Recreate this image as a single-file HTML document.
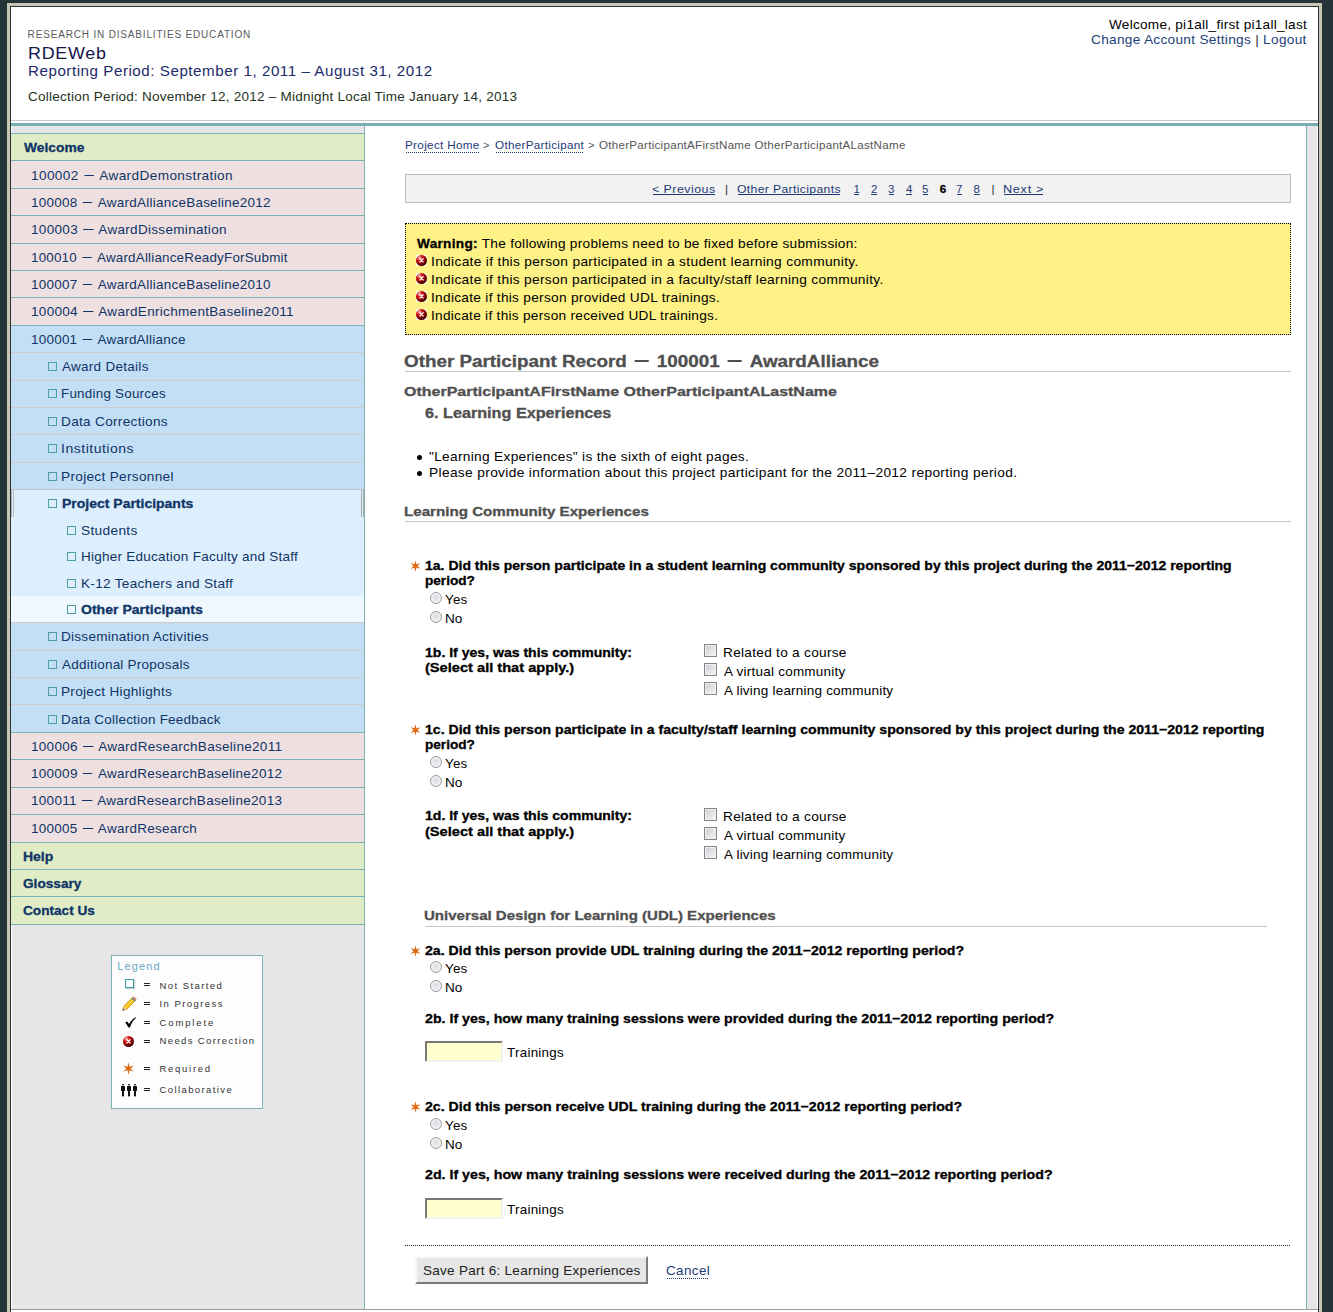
<!DOCTYPE html>
<html><head><meta charset="utf-8"><title>RDEWeb</title>
<style>
html,body{margin:0;padding:0;}
body{width:1333px;height:1312px;overflow:hidden;position:relative;background:#243438;font-family:'Liberation Sans', sans-serif;}
b{font-weight:bold;-webkit-text-stroke:0.3px currentColor;}
svg{display:block;}
.md{display:inline-block;width:9.5px;height:1px;background:currentColor;vertical-align:4px;margin:0 5px}.mdt{display:inline-block;width:12.5px;height:2px;background:currentColor;vertical-align:5px;margin:0 6.5px}
</style></head><body>
<div style="position:absolute;left:7px;top:3px;width:1315px;height:1400px;background:#c8c6b2"></div>
<div style="position:absolute;left:10px;top:6px;width:1309px;height:1400px;background:#243438"></div>
<div style="position:absolute;left:11px;top:7px;width:1307px;height:1400px;background:#fff"></div>
<div style="position:absolute;left:11px;top:120px;width:1307px;height:1px;background:#c9c9c9"></div>
<div style="position:absolute;left:11px;top:123px;width:1307px;height:3px;background:#76b0b2"></div>
<div style="position:absolute;left:12px;top:126px;width:352px;height:1183px;background:#e6e6e6"></div>
<div style="position:absolute;left:364px;top:126px;width:1px;height:1183px;background:#79b3b6"></div>
<div style="position:absolute;left:1307px;top:126px;width:10px;height:1183px;background:#e6e6e6"></div>
<div style="position:absolute;left:1306px;top:126px;width:1px;height:1183px;background:#79b3b6"></div>
<div style="position:absolute;left:11px;top:1309px;width:1307px;height:1px;background:#9a9a9a"></div>
<div style="position:absolute;left:11px;top:134px;width:353px;height:26px;background:#dfecc6"></div>
<div style="position:absolute;left:11px;top:161px;width:353px;height:27px;background:#eee0e1"></div>
<div style="position:absolute;left:11px;top:189px;width:353px;height:26px;background:#eee0e1"></div>
<div style="position:absolute;left:11px;top:216px;width:353px;height:27px;background:#eee0e1"></div>
<div style="position:absolute;left:11px;top:244px;width:353px;height:26px;background:#eee0e1"></div>
<div style="position:absolute;left:11px;top:271px;width:353px;height:26px;background:#eee0e1"></div>
<div style="position:absolute;left:11px;top:298px;width:353px;height:27px;background:#eee0e1"></div>
<div style="position:absolute;left:11px;top:326px;width:353px;height:26px;background:#c3dff5"></div>
<div style="position:absolute;left:11px;top:353px;width:353px;height:27px;background:#c3dff5"></div>
<div style="position:absolute;left:11px;top:381px;width:353px;height:26px;background:#c3dff5"></div>
<div style="position:absolute;left:11px;top:408px;width:353px;height:26px;background:#c3dff5"></div>
<div style="position:absolute;left:11px;top:435px;width:353px;height:27px;background:#c3dff5"></div>
<div style="position:absolute;left:11px;top:463px;width:353px;height:26px;background:#c3dff5"></div>
<div style="position:absolute;left:11px;top:133px;width:353px;height:1px;background:#79b3b6"></div>
<div style="position:absolute;left:11px;top:160px;width:353px;height:1px;background:#79b3b6"></div>
<div style="position:absolute;left:11px;top:188px;width:353px;height:1px;background:#79b3b6"></div>
<div style="position:absolute;left:11px;top:215px;width:353px;height:1px;background:#79b3b6"></div>
<div style="position:absolute;left:11px;top:243px;width:353px;height:1px;background:#79b3b6"></div>
<div style="position:absolute;left:11px;top:270px;width:353px;height:1px;background:#79b3b6"></div>
<div style="position:absolute;left:11px;top:297px;width:353px;height:1px;background:#79b3b6"></div>
<div style="position:absolute;left:11px;top:325px;width:353px;height:1px;background:#79b3b6"></div>
<div style="position:absolute;left:11px;top:352px;width:353px;height:1px;background:#cfcccb"></div>
<div style="position:absolute;left:11px;top:380px;width:353px;height:1px;background:#cfcccb"></div>
<div style="position:absolute;left:11px;top:407px;width:353px;height:1px;background:#cfcccb"></div>
<div style="position:absolute;left:11px;top:434px;width:353px;height:1px;background:#cfcccb"></div>
<div style="position:absolute;left:11px;top:462px;width:353px;height:1px;background:#cfcccb"></div>
<div style="position:absolute;left:11px;top:489px;width:353px;height:1px;background:#cfcccb"></div>
<div style="position:absolute;left:11px;top:490px;width:353px;height:106px;background:#ddeefd"></div>
<div style="position:absolute;left:11px;top:596px;width:353px;height:26px;background:#eff8fe"></div>
<div style="position:absolute;left:11px;top:489px;width:351px;height:1px;background:#c6c4c4"></div>
<div style="position:absolute;left:11px;top:490px;width:1px;height:27px;background:#b0b0b0"></div>
<div style="position:absolute;left:13px;top:490px;width:1px;height:27px;background:#b8b8b8"></div>
<div style="position:absolute;left:361px;top:490px;width:1px;height:27px;background:#a8a8a8"></div>
<div style="position:absolute;left:363px;top:489px;width:1px;height:28px;background:#a8a8a8"></div>
<div style="position:absolute;left:11px;top:623px;width:353px;height:27px;background:#c3dff5"></div>
<div style="position:absolute;left:11px;top:651px;width:353px;height:26px;background:#c3dff5"></div>
<div style="position:absolute;left:11px;top:678px;width:353px;height:26px;background:#c3dff5"></div>
<div style="position:absolute;left:11px;top:705px;width:353px;height:27px;background:#c3dff5"></div>
<div style="position:absolute;left:11px;top:733px;width:353px;height:26px;background:#eee0e1"></div>
<div style="position:absolute;left:11px;top:760px;width:353px;height:27px;background:#eee0e1"></div>
<div style="position:absolute;left:11px;top:788px;width:353px;height:26px;background:#eee0e1"></div>
<div style="position:absolute;left:11px;top:815px;width:353px;height:27px;background:#eee0e1"></div>
<div style="position:absolute;left:11px;top:843px;width:353px;height:26px;background:#dfecc6"></div>
<div style="position:absolute;left:11px;top:870px;width:353px;height:26px;background:#dfecc6"></div>
<div style="position:absolute;left:11px;top:897px;width:353px;height:27px;background:#dfecc6"></div>
<div style="position:absolute;left:11px;top:622px;width:353px;height:1px;background:#cfcccb"></div>
<div style="position:absolute;left:11px;top:650px;width:353px;height:1px;background:#cfcccb"></div>
<div style="position:absolute;left:11px;top:677px;width:353px;height:1px;background:#cfcccb"></div>
<div style="position:absolute;left:11px;top:704px;width:353px;height:1px;background:#cfcccb"></div>
<div style="position:absolute;left:11px;top:732px;width:353px;height:1px;background:#79b3b6"></div>
<div style="position:absolute;left:11px;top:759px;width:353px;height:1px;background:#79b3b6"></div>
<div style="position:absolute;left:11px;top:787px;width:353px;height:1px;background:#79b3b6"></div>
<div style="position:absolute;left:11px;top:814px;width:353px;height:1px;background:#79b3b6"></div>
<div style="position:absolute;left:11px;top:842px;width:353px;height:1px;background:#79b3b6"></div>
<div style="position:absolute;left:11px;top:869px;width:353px;height:1px;background:#79b3b6"></div>
<div style="position:absolute;left:11px;top:896px;width:353px;height:1px;background:#79b3b6"></div>
<div style="position:absolute;left:11px;top:924px;width:353px;height:1px;background:#79b3b6"></div>
<div style="position:absolute;left:48px;top:362px;width:7px;height:7px;border:1px solid #4f9ea6;background:transparent"></div>
<div style="position:absolute;left:48px;top:389px;width:7px;height:7px;border:1px solid #4f9ea6;background:transparent"></div>
<div style="position:absolute;left:48px;top:417px;width:7px;height:7px;border:1px solid #4f9ea6;background:transparent"></div>
<div style="position:absolute;left:48px;top:444px;width:7px;height:7px;border:1px solid #4f9ea6;background:transparent"></div>
<div style="position:absolute;left:48px;top:472px;width:7px;height:7px;border:1px solid #4f9ea6;background:transparent"></div>
<div style="position:absolute;left:48px;top:499px;width:7px;height:7px;border:1px solid #4f9ea6;background:transparent"></div>
<div style="position:absolute;left:67px;top:526px;width:7px;height:7px;border:1px solid #4f9ea6;background:transparent"></div>
<div style="position:absolute;left:67px;top:552px;width:7px;height:7px;border:1px solid #4f9ea6;background:transparent"></div>
<div style="position:absolute;left:67px;top:579px;width:7px;height:7px;border:1px solid #4f9ea6;background:transparent"></div>
<div style="position:absolute;left:67px;top:605px;width:7px;height:7px;border:1px solid #4f9ea6;background:transparent"></div>
<div style="position:absolute;left:48px;top:632px;width:7px;height:7px;border:1px solid #4f9ea6;background:transparent"></div>
<div style="position:absolute;left:48px;top:660px;width:7px;height:7px;border:1px solid #4f9ea6;background:transparent"></div>
<div style="position:absolute;left:48px;top:687px;width:7px;height:7px;border:1px solid #4f9ea6;background:transparent"></div>
<div style="position:absolute;left:48px;top:715px;width:7px;height:7px;border:1px solid #4f9ea6;background:transparent"></div>
<div style="position:absolute;left:406px;top:152px;width:73px;height:1px;background:repeating-linear-gradient(90deg,#1e3a78 0 1px,transparent 1px 2px)"></div>
<div style="position:absolute;left:496px;top:152px;width:88px;height:1px;background:repeating-linear-gradient(90deg,#1e3a78 0 1px,transparent 1px 2px)"></div>
<div style="position:absolute;left:405px;top:174px;width:884px;height:27px;border:1px solid #b9b9b9;background:#f2f2f2"></div>
<div style="position:absolute;left:653px;top:194px;width:62px;height:1px;background:#1e3a78"></div>
<div style="position:absolute;left:738px;top:194px;width:102px;height:1px;background:#1e3a78"></div>
<div style="position:absolute;left:854px;top:194px;width:5px;height:1px;background:#1e3a78"></div>
<div style="position:absolute;left:871px;top:194px;width:6px;height:1px;background:#1e3a78"></div>
<div style="position:absolute;left:889px;top:194px;width:5px;height:1px;background:#1e3a78"></div>
<div style="position:absolute;left:906px;top:194px;width:6px;height:1px;background:#1e3a78"></div>
<div style="position:absolute;left:923px;top:194px;width:5px;height:1px;background:#1e3a78"></div>
<div style="position:absolute;left:957px;top:194px;width:5px;height:1px;background:#1e3a78"></div>
<div style="position:absolute;left:974px;top:194px;width:6px;height:1px;background:#1e3a78"></div>
<div style="position:absolute;left:1004px;top:194px;width:39px;height:1px;background:#1e3a78"></div>
<div style="position:absolute;left:405px;top:223px;width:884px;height:110px;border:1px dotted #000;background:#fef185"></div>
<div style="position:absolute;left:416px;top:255px;width:11px;height:11px"><svg width="11" height="11" viewBox="0 0 11 11"><defs><radialGradient id="rg0" cx="0.3" cy="0.25" r="0.8"><stop offset="0" stop-color="#f4b8b8"/><stop offset="0.35" stop-color="#d40c0c"/><stop offset="1" stop-color="#3a0000"/></radialGradient></defs><rect width="11" height="11" fill="#fff" opacity="0.9"/><circle cx="5.5" cy="5.5" r="5.5" fill="url(#rg0)"/><path d="M3.9 3.7L7.1 6.9M7.1 3.7L3.9 6.9" stroke="#fff" stroke-width="1.35" stroke-linecap="round"/></svg></div>
<div style="position:absolute;left:416px;top:273px;width:11px;height:11px"><svg width="11" height="11" viewBox="0 0 11 11"><defs><radialGradient id="rg1" cx="0.3" cy="0.25" r="0.8"><stop offset="0" stop-color="#f4b8b8"/><stop offset="0.35" stop-color="#d40c0c"/><stop offset="1" stop-color="#3a0000"/></radialGradient></defs><rect width="11" height="11" fill="#fff" opacity="0.9"/><circle cx="5.5" cy="5.5" r="5.5" fill="url(#rg1)"/><path d="M3.9 3.7L7.1 6.9M7.1 3.7L3.9 6.9" stroke="#fff" stroke-width="1.35" stroke-linecap="round"/></svg></div>
<div style="position:absolute;left:416px;top:291px;width:11px;height:11px"><svg width="11" height="11" viewBox="0 0 11 11"><defs><radialGradient id="rg2" cx="0.3" cy="0.25" r="0.8"><stop offset="0" stop-color="#f4b8b8"/><stop offset="0.35" stop-color="#d40c0c"/><stop offset="1" stop-color="#3a0000"/></radialGradient></defs><rect width="11" height="11" fill="#fff" opacity="0.9"/><circle cx="5.5" cy="5.5" r="5.5" fill="url(#rg2)"/><path d="M3.9 3.7L7.1 6.9M7.1 3.7L3.9 6.9" stroke="#fff" stroke-width="1.35" stroke-linecap="round"/></svg></div>
<div style="position:absolute;left:416px;top:309px;width:11px;height:11px"><svg width="11" height="11" viewBox="0 0 11 11"><defs><radialGradient id="rg3" cx="0.3" cy="0.25" r="0.8"><stop offset="0" stop-color="#f4b8b8"/><stop offset="0.35" stop-color="#d40c0c"/><stop offset="1" stop-color="#3a0000"/></radialGradient></defs><rect width="11" height="11" fill="#fff" opacity="0.9"/><circle cx="5.5" cy="5.5" r="5.5" fill="url(#rg3)"/><path d="M3.9 3.7L7.1 6.9M7.1 3.7L3.9 6.9" stroke="#fff" stroke-width="1.35" stroke-linecap="round"/></svg></div>
<div style="position:absolute;left:405px;top:371px;width:886px;height:1px;background:#c8c8c8"></div>
<div style="position:absolute;left:405px;top:521px;width:886px;height:1px;background:#c8c8c8"></div>
<div style="position:absolute;left:425px;top:926px;width:842px;height:1px;background:#c8c8c8"></div>
<div style="position:absolute;left:417px;top:455px;width:5px;height:5px;border-radius:50%;background:#000"></div>
<div style="position:absolute;left:417px;top:471px;width:5px;height:5px;border-radius:50%;background:#000"></div>
<div style="position:absolute;left:410px;top:560.3px;width:11px;height:12px"><svg width="11" height="12" viewBox="-5.5 -6 11 12"><path d="M0.00 -5.70 L0.95 -1.65 L4.94 -2.85 L1.90 -0.00 L4.94 2.85 L0.95 1.65 L0.00 5.70 L-0.95 1.65 L-4.94 2.85 L-1.90 0.00 L-4.94 -2.85 L-0.95 -1.65Z" fill="#e06a12"/></svg></div>
<div style="position:absolute;left:410px;top:723.5px;width:11px;height:12px"><svg width="11" height="12" viewBox="-5.5 -6 11 12"><path d="M0.00 -5.70 L0.95 -1.65 L4.94 -2.85 L1.90 -0.00 L4.94 2.85 L0.95 1.65 L0.00 5.70 L-0.95 1.65 L-4.94 2.85 L-1.90 0.00 L-4.94 -2.85 L-0.95 -1.65Z" fill="#e06a12"/></svg></div>
<div style="position:absolute;left:410px;top:944.5px;width:11px;height:12px"><svg width="11" height="12" viewBox="-5.5 -6 11 12"><path d="M0.00 -5.70 L0.95 -1.65 L4.94 -2.85 L1.90 -0.00 L4.94 2.85 L0.95 1.65 L0.00 5.70 L-0.95 1.65 L-4.94 2.85 L-1.90 0.00 L-4.94 -2.85 L-0.95 -1.65Z" fill="#e06a12"/></svg></div>
<div style="position:absolute;left:410px;top:1100.8px;width:11px;height:12px"><svg width="11" height="12" viewBox="-5.5 -6 11 12"><path d="M0.00 -5.70 L0.95 -1.65 L4.94 -2.85 L1.90 -0.00 L4.94 2.85 L0.95 1.65 L0.00 5.70 L-0.95 1.65 L-4.94 2.85 L-1.90 0.00 L-4.94 -2.85 L-0.95 -1.65Z" fill="#e06a12"/></svg></div>
<div style="position:absolute;left:430px;top:592px;width:10px;height:10px;border-radius:50%;border:1px solid #9a9a9a;box-shadow:inset 0 0 0 1px #f4f4f4;background:radial-gradient(circle at 50% 40%,#d7dbe0 0,#e9ebee 45%,#f7f7f7 100%)"></div>
<div style="position:absolute;left:430px;top:611px;width:10px;height:10px;border-radius:50%;border:1px solid #9a9a9a;box-shadow:inset 0 0 0 1px #f4f4f4;background:radial-gradient(circle at 50% 40%,#d7dbe0 0,#e9ebee 45%,#f7f7f7 100%)"></div>
<div style="position:absolute;left:430px;top:756px;width:10px;height:10px;border-radius:50%;border:1px solid #9a9a9a;box-shadow:inset 0 0 0 1px #f4f4f4;background:radial-gradient(circle at 50% 40%,#d7dbe0 0,#e9ebee 45%,#f7f7f7 100%)"></div>
<div style="position:absolute;left:430px;top:775px;width:10px;height:10px;border-radius:50%;border:1px solid #9a9a9a;box-shadow:inset 0 0 0 1px #f4f4f4;background:radial-gradient(circle at 50% 40%,#d7dbe0 0,#e9ebee 45%,#f7f7f7 100%)"></div>
<div style="position:absolute;left:430px;top:961px;width:10px;height:10px;border-radius:50%;border:1px solid #9a9a9a;box-shadow:inset 0 0 0 1px #f4f4f4;background:radial-gradient(circle at 50% 40%,#d7dbe0 0,#e9ebee 45%,#f7f7f7 100%)"></div>
<div style="position:absolute;left:430px;top:980px;width:10px;height:10px;border-radius:50%;border:1px solid #9a9a9a;box-shadow:inset 0 0 0 1px #f4f4f4;background:radial-gradient(circle at 50% 40%,#d7dbe0 0,#e9ebee 45%,#f7f7f7 100%)"></div>
<div style="position:absolute;left:430px;top:1118px;width:10px;height:10px;border-radius:50%;border:1px solid #9a9a9a;box-shadow:inset 0 0 0 1px #f4f4f4;background:radial-gradient(circle at 50% 40%,#d7dbe0 0,#e9ebee 45%,#f7f7f7 100%)"></div>
<div style="position:absolute;left:430px;top:1137px;width:10px;height:10px;border-radius:50%;border:1px solid #9a9a9a;box-shadow:inset 0 0 0 1px #f4f4f4;background:radial-gradient(circle at 50% 40%,#d7dbe0 0,#e9ebee 45%,#f7f7f7 100%)"></div>
<div style="position:absolute;left:704px;top:644px;width:11px;height:11px;border:1px solid #858585;box-shadow:inset 0 0 0 1px #f0f0f0;background:linear-gradient(135deg,#c9ccd0 0,#e2e4e7 55%,#f6f6f6 100%)"></div>
<div style="position:absolute;left:704px;top:663px;width:11px;height:11px;border:1px solid #858585;box-shadow:inset 0 0 0 1px #f0f0f0;background:linear-gradient(135deg,#c9ccd0 0,#e2e4e7 55%,#f6f6f6 100%)"></div>
<div style="position:absolute;left:704px;top:682px;width:11px;height:11px;border:1px solid #858585;box-shadow:inset 0 0 0 1px #f0f0f0;background:linear-gradient(135deg,#c9ccd0 0,#e2e4e7 55%,#f6f6f6 100%)"></div>
<div style="position:absolute;left:704px;top:808px;width:11px;height:11px;border:1px solid #858585;box-shadow:inset 0 0 0 1px #f0f0f0;background:linear-gradient(135deg,#c9ccd0 0,#e2e4e7 55%,#f6f6f6 100%)"></div>
<div style="position:absolute;left:704px;top:827px;width:11px;height:11px;border:1px solid #858585;box-shadow:inset 0 0 0 1px #f0f0f0;background:linear-gradient(135deg,#c9ccd0 0,#e2e4e7 55%,#f6f6f6 100%)"></div>
<div style="position:absolute;left:704px;top:846px;width:11px;height:11px;border:1px solid #858585;box-shadow:inset 0 0 0 1px #f0f0f0;background:linear-gradient(135deg,#c9ccd0 0,#e2e4e7 55%,#f6f6f6 100%)"></div>
<div style="position:absolute;left:425px;top:1041px;width:74px;height:17px;border-top:2px solid #777;border-left:2px solid #777;border-right:2px solid #f1f1f1;border-bottom:2px solid #f1f1f1;background:#ffffd0"></div>
<div style="position:absolute;left:425px;top:1198px;width:74px;height:17px;border-top:2px solid #777;border-left:2px solid #777;border-right:2px solid #f1f1f1;border-bottom:2px solid #f1f1f1;background:#ffffd0"></div>
<div style="position:absolute;left:405px;top:1245px;width:885px;height:1px;background:repeating-linear-gradient(90deg,#222 0 1px,transparent 1px 2px)"></div>
<div style="position:absolute;left:415px;top:1256px;width:229px;height:24px;border-top:2px solid #f8f8f8;border-left:2px solid #f8f8f8;border-right:2px solid #7a7a7a;border-bottom:2px solid #7a7a7a;background:#e6e6e6"></div>
<div style="position:absolute;left:667px;top:1278px;width:42px;height:1px;background:repeating-linear-gradient(90deg,#1e3a78 0 1px,transparent 1px 2px)"></div>
<div style="position:absolute;left:111px;top:955px;width:150px;height:152px;border:1px solid #79b3b6;background:#fdfdfd"></div>
<div style="position:absolute;left:144px;top:983px;width:6px;height:1px;background:#222"></div>
<div style="position:absolute;left:144px;top:985px;width:6px;height:1px;background:#222"></div>
<div style="position:absolute;left:144px;top:1002px;width:6px;height:1px;background:#222"></div>
<div style="position:absolute;left:144px;top:1004px;width:6px;height:1px;background:#222"></div>
<div style="position:absolute;left:144px;top:1021px;width:6px;height:1px;background:#222"></div>
<div style="position:absolute;left:144px;top:1023px;width:6px;height:1px;background:#222"></div>
<div style="position:absolute;left:144px;top:1040px;width:6px;height:1px;background:#222"></div>
<div style="position:absolute;left:144px;top:1042px;width:6px;height:1px;background:#222"></div>
<div style="position:absolute;left:144px;top:1067px;width:6px;height:1px;background:#222"></div>
<div style="position:absolute;left:144px;top:1069px;width:6px;height:1px;background:#222"></div>
<div style="position:absolute;left:144px;top:1088px;width:6px;height:1px;background:#222"></div>
<div style="position:absolute;left:144px;top:1090px;width:6px;height:1px;background:#222"></div>
<div style="position:absolute;left:125px;top:979px;width:7px;height:7px;border:1px solid #3f9aab;background:#fff;box-shadow:1px 1px 1px #ccc"></div>
<div style="position:absolute;left:122px;top:996px;width:15px;height:15px"><svg width="15" height="15" viewBox="0 0 15 15"><path d="M0.6 14.4 L1.8 10.2 L10.6 1.4 L13.6 4.4 L4.8 13.2 Z" fill="#f5c518" stroke="#d08a0c" stroke-width="0.8"/><path d="M3 11.6 L11.6 3" stroke="#fbe27a" stroke-width="0.9"/><path d="M0.6 14.4 L1.8 10.2 L4.8 13.2Z" fill="#ead2a8"/><path d="M0.6 14.4 L1.2 12.3 L2.7 13.8Z" fill="#555"/><path d="M9.6 2.4 L12.6 5.4 L13.6 4.4 L10.6 1.4Z" fill="#3f86b5"/><path d="M10.6 1.4 L11.8 0.3 L14.7 3.2 L13.6 4.4Z" fill="#f0806a"/></svg></div>
<div style="position:absolute;left:125px;top:1017px;width:11px;height:11px"><svg width="11" height="11" viewBox="0 0 11 11"><path d="M0.3 5.6 L2.2 4.6 L4.1 7.0 C5.6 4.2 7.6 1.8 10.8 0.2 L11 1.0 C8.3 3.0 6.4 6.0 4.9 10.6 L3.5 10.6 Z" fill="#000"/></svg></div>
<div style="position:absolute;left:123px;top:1036px;width:11px;height:11px"><svg width="11" height="11" viewBox="0 0 11 11"><defs><radialGradient id="rg9" cx="0.3" cy="0.25" r="0.8"><stop offset="0" stop-color="#f4b8b8"/><stop offset="0.35" stop-color="#d40c0c"/><stop offset="1" stop-color="#3a0000"/></radialGradient></defs><circle cx="5.5" cy="5.5" r="5.5" fill="url(#rg9)"/><path d="M3.9 3.7L7.1 6.9M7.1 3.7L3.9 6.9" stroke="#fff" stroke-width="1.35" stroke-linecap="round"/></svg></div>
<div style="position:absolute;left:122.9px;top:1061.6px;width:11px;height:13px"><svg width="11" height="13" viewBox="-5.1 -6 10.2 12"><path d="M0.00 -5.70 L0.95 -1.65 L4.94 -2.85 L1.90 -0.00 L4.94 2.85 L0.95 1.65 L0.00 5.70 L-0.95 1.65 L-4.94 2.85 L-1.90 0.00 L-4.94 -2.85 L-0.95 -1.65Z" fill="#e06a12"/></svg></div>
<div style="position:absolute;left:120px;top:1084px;width:18px;height:14px"><svg width="18" height="14" viewBox="0 0 18 14"><g fill="#111"><rect x="2" y="0" width="2" height="1.6" rx="0.8"/><rect x="1" y="2" width="4" height="5" rx="0.5"/><rect x="2" y="6.5" width="2" height="6" rx="0.8"/></g><g fill="#111"><rect x="8" y="0" width="2" height="1.6" rx="0.8"/><rect x="7" y="2" width="4" height="5" rx="0.5"/><rect x="8" y="6.5" width="2" height="6" rx="0.8"/></g><g fill="#111"><rect x="14" y="0" width="2" height="1.6" rx="0.8"/><rect x="13" y="2" width="4" height="5" rx="0.5"/><rect x="14" y="6.5" width="2" height="6" rx="0.8"/></g></svg></div>
<div style="position:absolute;left:27.6px;top:29px;font-size:10px;font-weight:normal;color:#5a5a5a;white-space:nowrap;line-height:normal;letter-spacing:0.827px;">RESEARCH IN DISABILITIES EDUCATION</div>
<div style="position:absolute;left:27.6px;top:44px;font-size:17px;font-weight:normal;color:#15154a;white-space:nowrap;line-height:normal;letter-spacing:0.714px;transform:scaleX(1.0514);transform-origin:0 0;">RDEWeb</div>
<div style="position:absolute;left:27.6px;top:63px;font-size:14px;font-weight:normal;color:#1d2b6c;white-space:nowrap;line-height:normal;letter-spacing:0.497px;transform:scaleX(1.0821);transform-origin:0 0;">Reporting Period: September 1, 2011 &ndash; August 31, 2012</div>
<div style="position:absolute;left:27.6px;top:89px;font-size:13px;font-weight:normal;color:#24321c;white-space:nowrap;line-height:normal;letter-spacing:0.224px;transform:scaleX(1.0395);transform-origin:0 0;">Collection Period: November 12, 2012 &ndash; Midnight Local Time January 14, 2013</div>
<div style="position:absolute;left:1108.8px;top:17px;font-size:13px;font-weight:normal;color:#000;white-space:nowrap;line-height:normal;letter-spacing:0.254px;transform:scaleX(1.0448);transform-origin:0 0;">Welcome, pi1all_first pi1all_last</div>
<div style="position:absolute;left:1090.7px;top:32px;font-size:13px;font-weight:normal;color:#1c3f7a;white-space:nowrap;line-height:normal;letter-spacing:0.284px;transform:scaleX(1.0495);transform-origin:0 0;">Change Account Settings <span style="color:#333">|</span> Logout</div>
<div style="position:absolute;left:23.75px;top:140px;font-size:13px;font-weight:bold;color:#0f3466;white-space:nowrap;line-height:normal;-webkit-text-stroke:0.3px currentColor;transform:scaleX(1.0617);transform-origin:0 0;">Welcome</div>
<div style="position:absolute;left:31.4px;top:168px;font-size:13px;font-weight:normal;color:#0f3466;white-space:nowrap;line-height:normal;letter-spacing:0.363px;transform:scaleX(1.0481);transform-origin:0 0;">100002<span class=md></span>AwardDemonstration</div>
<div style="position:absolute;left:31.4px;top:195px;font-size:13px;font-weight:normal;color:#0f3466;white-space:nowrap;line-height:normal;letter-spacing:0.25px;transform:scaleX(1.0358);transform-origin:0 0;">100008<span class=md></span>AwardAllianceBaseline2012</div>
<div style="position:absolute;left:31.4px;top:222px;font-size:13px;font-weight:normal;color:#0f3466;white-space:nowrap;line-height:normal;letter-spacing:0.281px;transform:scaleX(1.0422);transform-origin:0 0;">100003<span class=md></span>AwardDissemination</div>
<div style="position:absolute;left:31.4px;top:250px;font-size:13px;font-weight:normal;color:#0f3466;white-space:nowrap;line-height:normal;letter-spacing:0.197px;transform:scaleX(1.0303);transform-origin:0 0;">100010<span class=md></span>AwardAllianceReadyForSubmit</div>
<div style="position:absolute;left:31.4px;top:277px;font-size:13px;font-weight:normal;color:#0f3466;white-space:nowrap;line-height:normal;letter-spacing:0.25px;transform:scaleX(1.0358);transform-origin:0 0;">100007<span class=md></span>AwardAllianceBaseline2010</div>
<div style="position:absolute;left:31.4px;top:304px;font-size:13px;font-weight:normal;color:#0f3466;white-space:nowrap;line-height:normal;letter-spacing:0.285px;transform:scaleX(1.0411);transform-origin:0 0;">100004<span class=md></span>AwardEnrichmentBaseline2011</div>
<div style="position:absolute;left:31.4px;top:332px;font-size:13px;font-weight:normal;color:#0f3466;white-space:nowrap;line-height:normal;letter-spacing:0.228px;transform:scaleX(1.0353);transform-origin:0 0;">100001<span class=md></span>AwardAlliance</div>
<div style="position:absolute;left:62.2px;top:359px;font-size:13px;font-weight:normal;color:#0f3466;white-space:nowrap;line-height:normal;letter-spacing:0.282px;transform:scaleX(1.0362);transform-origin:0 0;">Award Details</div>
<div style="position:absolute;left:61.2px;top:386px;font-size:13px;font-weight:normal;color:#0f3466;white-space:nowrap;line-height:normal;letter-spacing:0.226px;transform:scaleX(1.0314);transform-origin:0 0;">Funding Sources</div>
<div style="position:absolute;left:61.2px;top:414px;font-size:13px;font-weight:normal;color:#0f3466;white-space:nowrap;line-height:normal;letter-spacing:0.286px;transform:scaleX(1.0469);transform-origin:0 0;">Data Corrections</div>
<div style="position:absolute;left:61.2px;top:441px;font-size:13px;font-weight:normal;color:#0f3466;white-space:nowrap;line-height:normal;letter-spacing:0.462px;transform:scaleX(1.0803);transform-origin:0 0;">Institutions</div>
<div style="position:absolute;left:61.2px;top:469px;font-size:13px;font-weight:normal;color:#0f3466;white-space:nowrap;line-height:normal;letter-spacing:0.299px;transform:scaleX(1.0475);transform-origin:0 0;">Project Personnel</div>
<div style="position:absolute;left:62px;top:496px;font-size:13px;font-weight:bold;color:#0f3466;white-space:nowrap;line-height:normal;-webkit-text-stroke:0.3px currentColor;transform:scaleX(1.0758);transform-origin:0 0;">Project Participants</div>
<div style="position:absolute;left:80.6px;top:523px;font-size:13px;font-weight:normal;color:#0f3466;white-space:nowrap;line-height:normal;letter-spacing:0.306px;transform:scaleX(1.053);transform-origin:0 0;">Students</div>
<div style="position:absolute;left:80.6px;top:549px;font-size:13px;font-weight:normal;color:#0f3466;white-space:nowrap;line-height:normal;letter-spacing:0.24px;transform:scaleX(1.0392);transform-origin:0 0;">Higher Education Faculty and Staff</div>
<div style="position:absolute;left:80.6px;top:576px;font-size:13px;font-weight:normal;color:#0f3466;white-space:nowrap;line-height:normal;letter-spacing:0.283px;transform:scaleX(1.0457);transform-origin:0 0;">K-12 Teachers and Staff</div>
<div style="position:absolute;left:80.6px;top:602px;font-size:13px;font-weight:bold;color:#0f3466;white-space:nowrap;line-height:normal;-webkit-text-stroke:0.3px currentColor;transform:scaleX(1.0811);transform-origin:0 0;">Other Participants</div>
<div style="position:absolute;left:61.2px;top:629px;font-size:13px;font-weight:normal;color:#0f3466;white-space:nowrap;line-height:normal;letter-spacing:0.229px;transform:scaleX(1.0455);transform-origin:0 0;">Dissemination Activities</div>
<div style="position:absolute;left:62.2px;top:657px;font-size:13px;font-weight:normal;color:#0f3466;white-space:nowrap;line-height:normal;letter-spacing:0.216px;transform:scaleX(1.0394);transform-origin:0 0;">Additional Proposals</div>
<div style="position:absolute;left:61.2px;top:684px;font-size:13px;font-weight:normal;color:#0f3466;white-space:nowrap;line-height:normal;letter-spacing:0.281px;transform:scaleX(1.046);transform-origin:0 0;">Project Highlights</div>
<div style="position:absolute;left:61.2px;top:712px;font-size:13px;font-weight:normal;color:#0f3466;white-space:nowrap;line-height:normal;letter-spacing:0.199px;transform:scaleX(1.0391);transform-origin:0 0;">Data Collection Feedback</div>
<div style="position:absolute;left:31.4px;top:739px;font-size:13px;font-weight:normal;color:#0f3466;white-space:nowrap;line-height:normal;letter-spacing:0.281px;transform:scaleX(1.0396);transform-origin:0 0;">100006<span class=md></span>AwardResearchBaseline2011</div>
<div style="position:absolute;left:31.4px;top:766px;font-size:13px;font-weight:normal;color:#0f3466;white-space:nowrap;line-height:normal;letter-spacing:0.266px;transform:scaleX(1.0373);transform-origin:0 0;">100009<span class=md></span>AwardResearchBaseline2012</div>
<div style="position:absolute;left:31.4px;top:793px;font-size:13px;font-weight:normal;color:#0f3466;white-space:nowrap;line-height:normal;letter-spacing:0.281px;transform:scaleX(1.0396);transform-origin:0 0;">100011<span class=md></span>AwardResearchBaseline2013</div>
<div style="position:absolute;left:31.4px;top:821px;font-size:13px;font-weight:normal;color:#0f3466;white-space:nowrap;line-height:normal;letter-spacing:0.268px;transform:scaleX(1.0366);transform-origin:0 0;">100005<span class=md></span>AwardResearch</div>
<div style="position:absolute;left:22.5px;top:849px;font-size:13px;font-weight:bold;color:#0f3466;white-space:nowrap;line-height:normal;-webkit-text-stroke:0.3px currentColor;transform:scaleX(1.0741);transform-origin:0 0;">Help</div>
<div style="position:absolute;left:22.5px;top:876px;font-size:13px;font-weight:bold;color:#0f3466;white-space:nowrap;line-height:normal;-webkit-text-stroke:0.3px currentColor;transform:scaleX(1.0493);transform-origin:0 0;">Glossary</div>
<div style="position:absolute;left:22.5px;top:903px;font-size:13px;font-weight:bold;color:#0f3466;white-space:nowrap;line-height:normal;-webkit-text-stroke:0.3px currentColor;transform:scaleX(1.0478);transform-origin:0 0;">Contact Us</div>
<div style="position:absolute;left:404.9px;top:139px;font-size:11px;font-weight:normal;color:#1e3a78;white-space:nowrap;line-height:normal;letter-spacing:0.299px;transform:scaleX(1.0631);transform-origin:0 0;">Project Home</div>
<div style="position:absolute;left:483px;top:139px;font-size:11px;font-weight:normal;color:#555;white-space:nowrap;line-height:normal;">&gt;</div>
<div style="position:absolute;left:494.7px;top:139px;font-size:11px;font-weight:normal;color:#1e3a78;white-space:nowrap;line-height:normal;letter-spacing:0.266px;transform:scaleX(1.0647);transform-origin:0 0;">OtherParticipant</div>
<div style="position:absolute;left:588px;top:139px;font-size:11px;font-weight:normal;color:#555;white-space:nowrap;line-height:normal;">&gt;</div>
<div style="position:absolute;left:599.4px;top:139px;font-size:11px;font-weight:normal;color:#555;white-space:nowrap;line-height:normal;letter-spacing:0.265px;transform:scaleX(1.0524);transform-origin:0 0;">OtherParticipantAFirstName OtherParticipantALastName</div>
<div style="position:absolute;left:652.2px;top:183px;font-size:11.5px;font-weight:normal;color:#1e3a78;white-space:nowrap;line-height:normal;letter-spacing:0.41px;transform:scaleX(1.083);transform-origin:0 0;">&lt; Previous</div>
<div style="position:absolute;left:725px;top:183px;font-size:11.5px;font-weight:normal;color:#222;white-space:nowrap;line-height:normal;">|</div>
<div style="position:absolute;left:737.2px;top:183px;font-size:11.5px;font-weight:normal;color:#1e3a78;white-space:nowrap;line-height:normal;letter-spacing:0.333px;transform:scaleX(1.0593);transform-origin:0 0;">Other Participants</div>
<div style="position:absolute;left:853.5px;top:183px;font-size:11.5px;font-weight:normal;color:#1e3a78;white-space:nowrap;line-height:normal;">1</div>
<div style="position:absolute;left:870.9px;top:183px;font-size:11.5px;font-weight:normal;color:#1e3a78;white-space:nowrap;line-height:normal;">2</div>
<div style="position:absolute;left:888px;top:183px;font-size:11.5px;font-weight:normal;color:#1e3a78;white-space:nowrap;line-height:normal;">3</div>
<div style="position:absolute;left:906px;top:183px;font-size:11.5px;font-weight:normal;color:#1e3a78;white-space:nowrap;line-height:normal;">4</div>
<div style="position:absolute;left:922px;top:183px;font-size:11.5px;font-weight:normal;color:#1e3a78;white-space:nowrap;line-height:normal;">5</div>
<div style="position:absolute;left:939.7px;top:183px;font-size:11.5px;font-weight:bold;color:#000;white-space:nowrap;line-height:normal;-webkit-text-stroke:0.3px currentColor;">6</div>
<div style="position:absolute;left:956px;top:183px;font-size:11.5px;font-weight:normal;color:#1e3a78;white-space:nowrap;line-height:normal;">7</div>
<div style="position:absolute;left:973.4px;top:183px;font-size:11.5px;font-weight:normal;color:#1e3a78;white-space:nowrap;line-height:normal;">8</div>
<div style="position:absolute;left:991.4px;top:183px;font-size:11.5px;font-weight:normal;color:#222;white-space:nowrap;line-height:normal;">|</div>
<div style="position:absolute;left:1003.4px;top:183px;font-size:11.5px;font-weight:normal;color:#1e3a78;white-space:nowrap;line-height:normal;letter-spacing:0.634px;transform:scaleX(1.1031);transform-origin:0 0;">Next &gt;</div>
<div style="position:absolute;left:416.5px;top:236px;font-size:13px;font-weight:normal;color:#000;white-space:nowrap;line-height:normal;letter-spacing:0.282px;transform:scaleX(1.0476);transform-origin:0 0;"><b>Warning:</b> The following problems need to be fixed before submission:</div>
<div style="position:absolute;left:430.7px;top:254px;font-size:13px;font-weight:normal;color:#000;white-space:nowrap;line-height:normal;letter-spacing:0.303px;transform:scaleX(1.0576);transform-origin:0 0;">Indicate if this person participated in a student learning community.</div>
<div style="position:absolute;left:430.7px;top:272px;font-size:13px;font-weight:normal;color:#000;white-space:nowrap;line-height:normal;letter-spacing:0.292px;transform:scaleX(1.0568);transform-origin:0 0;">Indicate if this person participated in a faculty/staff learning community.</div>
<div style="position:absolute;left:430.7px;top:290px;font-size:13px;font-weight:normal;color:#000;white-space:nowrap;line-height:normal;letter-spacing:0.279px;transform:scaleX(1.0512);transform-origin:0 0;">Indicate if this person provided UDL trainings.</div>
<div style="position:absolute;left:430.7px;top:308px;font-size:13px;font-weight:normal;color:#000;white-space:nowrap;line-height:normal;letter-spacing:0.269px;transform:scaleX(1.0494);transform-origin:0 0;">Indicate if this person received UDL trainings.</div>
<div style="position:absolute;left:404.4px;top:353px;font-size:16px;font-weight:bold;color:#4f4f4f;white-space:nowrap;line-height:normal;-webkit-text-stroke:0.3px currentColor;transform:scaleX(1.1766);transform-origin:0 0;">Other Participant Record<span class=mdt></span>100001<span class=mdt></span>AwardAlliance</div>
<div style="position:absolute;left:404.4px;top:384px;font-size:13px;font-weight:bold;color:#4f4f4f;white-space:nowrap;line-height:normal;-webkit-text-stroke:0.3px currentColor;transform:scaleX(1.2306);transform-origin:0 0;">OtherParticipantAFirstName OtherParticipantALastName</div>
<div style="position:absolute;left:425px;top:405px;font-size:14px;font-weight:bold;color:#4f4f4f;white-space:nowrap;line-height:normal;-webkit-text-stroke:0.3px currentColor;transform:scaleX(1.1569);transform-origin:0 0;">6. Learning Experiences</div>
<div style="position:absolute;left:429.4px;top:449px;font-size:13px;font-weight:normal;color:#000;white-space:nowrap;line-height:normal;letter-spacing:0.294px;transform:scaleX(1.0533);transform-origin:0 0;">&quot;Learning Experiences&quot; is the sixth of eight pages.</div>
<div style="position:absolute;left:429.4px;top:465px;font-size:13px;font-weight:normal;color:#000;white-space:nowrap;line-height:normal;letter-spacing:0.318px;transform:scaleX(1.0579);transform-origin:0 0;">Please provide information about this project participant for the 2011&ndash;2012 reporting period.</div>
<div style="position:absolute;left:404.4px;top:504px;font-size:13px;font-weight:bold;color:#4f4f4f;white-space:nowrap;line-height:normal;-webkit-text-stroke:0.3px currentColor;transform:scaleX(1.1645);transform-origin:0 0;">Learning Community Experiences</div>
<div style="position:absolute;left:424.2px;top:908px;font-size:13px;font-weight:bold;color:#4f4f4f;white-space:nowrap;line-height:normal;-webkit-text-stroke:0.3px currentColor;transform:scaleX(1.1564);transform-origin:0 0;">Universal Design for Learning (UDL) Experiences</div>
<div style="position:absolute;left:424.9px;top:558px;font-size:13px;font-weight:bold;color:#000;white-space:nowrap;line-height:normal;-webkit-text-stroke:0.3px currentColor;transform:scaleX(1.0784);transform-origin:0 0;">1a. Did this person participate in a student learning community sponsored by this project during the 2011&minus;2012 reporting</div>
<div style="position:absolute;left:424.9px;top:573px;font-size:13px;font-weight:bold;color:#000;white-space:nowrap;line-height:normal;-webkit-text-stroke:0.3px currentColor;transform:scaleX(1.0458);transform-origin:0 0;">period?</div>
<div style="position:absolute;left:445px;top:592px;font-size:13px;font-weight:normal;color:#000;white-space:nowrap;line-height:normal;letter-spacing:0.244px;transform:scaleX(1.025);transform-origin:0 0;">Yes</div>
<div style="position:absolute;left:445px;top:611px;font-size:13px;font-weight:normal;color:#000;white-space:nowrap;line-height:normal;transform:scaleX(1.04);transform-origin:0 0;">No</div>
<div style="position:absolute;left:424.9px;top:645px;font-size:13px;font-weight:bold;color:#000;white-space:nowrap;line-height:normal;-webkit-text-stroke:0.3px currentColor;transform:scaleX(1.081);transform-origin:0 0;">1b. If yes, was this community:</div>
<div style="position:absolute;left:424.9px;top:660px;font-size:13px;font-weight:bold;color:#000;white-space:nowrap;line-height:normal;-webkit-text-stroke:0.3px currentColor;transform:scaleX(1.1245);transform-origin:0 0;">(Select all that apply.)</div>
<div style="position:absolute;left:722.8px;top:645px;font-size:13px;font-weight:normal;color:#000;white-space:nowrap;line-height:normal;letter-spacing:0.265px;transform:scaleX(1.0505);transform-origin:0 0;">Related to a course</div>
<div style="position:absolute;left:723.8px;top:664px;font-size:13px;font-weight:normal;color:#000;white-space:nowrap;line-height:normal;letter-spacing:0.242px;transform:scaleX(1.0363);transform-origin:0 0;">A virtual community</div>
<div style="position:absolute;left:723.8px;top:683px;font-size:13px;font-weight:normal;color:#000;white-space:nowrap;line-height:normal;letter-spacing:0.203px;transform:scaleX(1.0389);transform-origin:0 0;">A living learning community</div>
<div style="position:absolute;left:424.9px;top:722px;font-size:13px;font-weight:bold;color:#000;white-space:nowrap;line-height:normal;-webkit-text-stroke:0.3px currentColor;transform:scaleX(1.0844);transform-origin:0 0;">1c. Did this person participate in a faculty/staff learning community sponsored by this project during the 2011&minus;2012 reporting</div>
<div style="position:absolute;left:424.9px;top:737px;font-size:13px;font-weight:bold;color:#000;white-space:nowrap;line-height:normal;-webkit-text-stroke:0.3px currentColor;transform:scaleX(1.0458);transform-origin:0 0;">period?</div>
<div style="position:absolute;left:445px;top:756px;font-size:13px;font-weight:normal;color:#000;white-space:nowrap;line-height:normal;letter-spacing:0.244px;transform:scaleX(1.025);transform-origin:0 0;">Yes</div>
<div style="position:absolute;left:445px;top:775px;font-size:13px;font-weight:normal;color:#000;white-space:nowrap;line-height:normal;transform:scaleX(1.04);transform-origin:0 0;">No</div>
<div style="position:absolute;left:424.9px;top:808px;font-size:13px;font-weight:bold;color:#000;white-space:nowrap;line-height:normal;-webkit-text-stroke:0.3px currentColor;transform:scaleX(1.081);transform-origin:0 0;">1d. If yes, was this community:</div>
<div style="position:absolute;left:424.9px;top:824px;font-size:13px;font-weight:bold;color:#000;white-space:nowrap;line-height:normal;-webkit-text-stroke:0.3px currentColor;transform:scaleX(1.1245);transform-origin:0 0;">(Select all that apply.)</div>
<div style="position:absolute;left:722.8px;top:809px;font-size:13px;font-weight:normal;color:#000;white-space:nowrap;line-height:normal;letter-spacing:0.265px;transform:scaleX(1.0505);transform-origin:0 0;">Related to a course</div>
<div style="position:absolute;left:723.8px;top:828px;font-size:13px;font-weight:normal;color:#000;white-space:nowrap;line-height:normal;letter-spacing:0.242px;transform:scaleX(1.0363);transform-origin:0 0;">A virtual community</div>
<div style="position:absolute;left:723.8px;top:847px;font-size:13px;font-weight:normal;color:#000;white-space:nowrap;line-height:normal;letter-spacing:0.203px;transform:scaleX(1.0389);transform-origin:0 0;">A living learning community</div>
<div style="position:absolute;left:424.5px;top:943px;font-size:13px;font-weight:bold;color:#000;white-space:nowrap;line-height:normal;-webkit-text-stroke:0.3px currentColor;transform:scaleX(1.0877);transform-origin:0 0;">2a. Did this person provide UDL training during the 2011&minus;2012 reporting period?</div>
<div style="position:absolute;left:445px;top:961px;font-size:13px;font-weight:normal;color:#000;white-space:nowrap;line-height:normal;letter-spacing:0.244px;transform:scaleX(1.025);transform-origin:0 0;">Yes</div>
<div style="position:absolute;left:445px;top:980px;font-size:13px;font-weight:normal;color:#000;white-space:nowrap;line-height:normal;transform:scaleX(1.04);transform-origin:0 0;">No</div>
<div style="position:absolute;left:424.5px;top:1011px;font-size:13px;font-weight:bold;color:#000;white-space:nowrap;line-height:normal;-webkit-text-stroke:0.3px currentColor;transform:scaleX(1.0921);transform-origin:0 0;">2b. If yes, how many training sessions were provided during the 2011&minus;2012 reporting period?</div>
<div style="position:absolute;left:507.2px;top:1045px;font-size:13px;font-weight:normal;color:#000;white-space:nowrap;line-height:normal;letter-spacing:0.273px;transform:scaleX(1.0274);transform-origin:0 0;">Trainings</div>
<div style="position:absolute;left:424.5px;top:1099px;font-size:13px;font-weight:bold;color:#000;white-space:nowrap;line-height:normal;-webkit-text-stroke:0.3px currentColor;transform:scaleX(1.0883);transform-origin:0 0;">2c. Did this person receive UDL training during the 2011&minus;2012 reporting period?</div>
<div style="position:absolute;left:445px;top:1118px;font-size:13px;font-weight:normal;color:#000;white-space:nowrap;line-height:normal;letter-spacing:0.244px;transform:scaleX(1.025);transform-origin:0 0;">Yes</div>
<div style="position:absolute;left:445px;top:1137px;font-size:13px;font-weight:normal;color:#000;white-space:nowrap;line-height:normal;transform:scaleX(1.04);transform-origin:0 0;">No</div>
<div style="position:absolute;left:424.5px;top:1167px;font-size:13px;font-weight:bold;color:#000;white-space:nowrap;line-height:normal;-webkit-text-stroke:0.3px currentColor;transform:scaleX(1.0934);transform-origin:0 0;">2d. If yes, how many training sessions were received during the 2011&minus;2012 reporting period?</div>
<div style="position:absolute;left:507.2px;top:1202px;font-size:13px;font-weight:normal;color:#000;white-space:nowrap;line-height:normal;letter-spacing:0.273px;transform:scaleX(1.0274);transform-origin:0 0;">Trainings</div>
<div style="position:absolute;left:422.5px;top:1263px;font-size:13px;font-weight:normal;color:#222;white-space:nowrap;line-height:normal;letter-spacing:0.255px;transform:scaleX(1.0395);transform-origin:0 0;">Save Part 6: Learning Experiences</div>
<div style="position:absolute;left:666.3px;top:1263px;font-size:13px;font-weight:normal;color:#1e3a78;white-space:nowrap;line-height:normal;letter-spacing:0.389px;transform:scaleX(1.0308);transform-origin:0 0;">Cancel</div>
<div style="position:absolute;left:117.2px;top:960px;font-size:11px;font-weight:normal;color:#6aa6c6;white-space:nowrap;line-height:normal;letter-spacing:1.12px;">Legend</div>
<div style="position:absolute;left:159.5px;top:980px;font-size:9.5px;font-weight:normal;color:#333;white-space:nowrap;line-height:normal;letter-spacing:1.43px;">Not Started</div>
<div style="position:absolute;left:159.5px;top:998px;font-size:9.5px;font-weight:normal;color:#333;white-space:nowrap;line-height:normal;letter-spacing:1.44px;">In Progress</div>
<div style="position:absolute;left:159.5px;top:1017px;font-size:9.5px;font-weight:normal;color:#333;white-space:nowrap;line-height:normal;letter-spacing:1.871px;">Complete</div>
<div style="position:absolute;left:159.5px;top:1035px;font-size:9.5px;font-weight:normal;color:#333;white-space:nowrap;line-height:normal;letter-spacing:1.379px;">Needs Correction</div>
<div style="position:absolute;left:159.5px;top:1063px;font-size:9.5px;font-weight:normal;color:#333;white-space:nowrap;line-height:normal;letter-spacing:1.728px;">Required</div>
<div style="position:absolute;left:159.5px;top:1084px;font-size:9.5px;font-weight:normal;color:#333;white-space:nowrap;line-height:normal;letter-spacing:1.4px;">Collaborative</div>
</body></html>
